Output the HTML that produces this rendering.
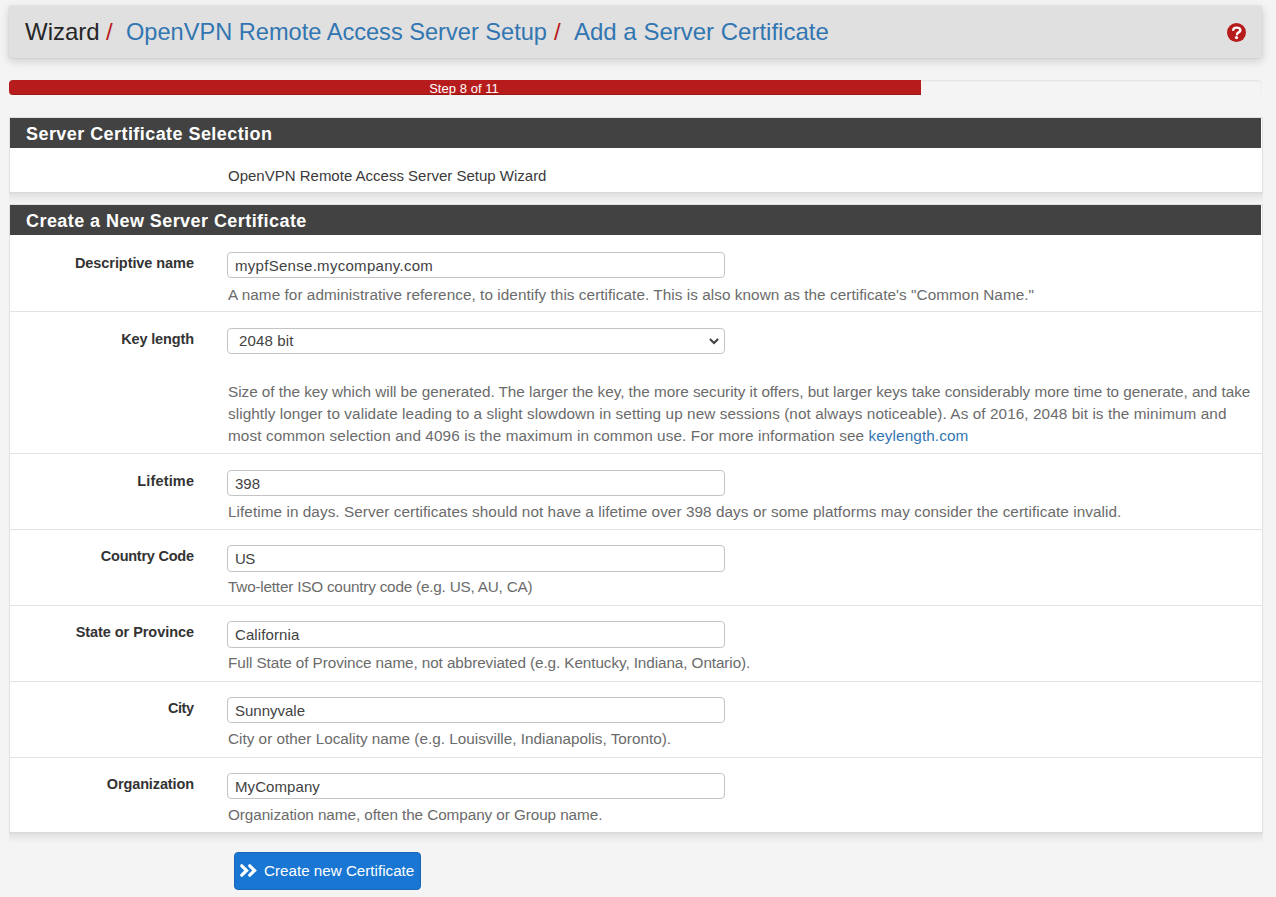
<!DOCTYPE html>
<html>
<head>
<meta charset="utf-8">
<style>
html,body{margin:0;padding:0;}
body{background:#f4f4f4;font-family:"Liberation Sans",sans-serif;color:#212121;width:1276px;height:897px;overflow:hidden;position:relative;}
.abs{position:absolute;}
.crumb{left:9px;top:6px;width:1253px;height:52px;background:#e0e0e0;border-radius:1px;box-shadow:0 3px 10px rgba(0,0,0,.16),0 0 2px rgba(0,0,0,.12);}
.ct{position:absolute;top:12px;font-size:24px;line-height:28px;white-space:nowrap;color:#262626;}
.ct.lk{color:#3276b1;}
.ct.sl{color:#b71c1c;}
.help{position:absolute;left:1217.5px;top:16.5px;width:19px;height:19px;}
.prog{left:9px;top:80px;width:1253px;height:15px;background:#f4f4f4;border-radius:4px;box-shadow:inset 0 1px 2px rgba(0,0,0,.08);overflow:hidden;}
.prog .bar{position:absolute;left:0;top:0;width:912px;height:15px;background:#b71c1c;color:#fff;font-size:13px;line-height:17px;text-align:center;text-indent:-2px;letter-spacing:0.05px;box-shadow:inset 0 -1px 0 rgba(0,0,0,.15);}
.panel{left:9px;width:1252px;background:#fff;border:1px solid #e0e0e0;border-bottom-color:#d9d9d9;}
.panel::after{content:"";position:absolute;left:-1px;right:-1px;top:calc(100% + 1px);height:10px;background:linear-gradient(rgba(0,0,0,.085),rgba(0,0,0,.04) 50%,rgba(0,0,0,0));}
.ph{height:30px;margin-right:1px;background:#424242;color:#fff;font-weight:bold;font-size:18px;letter-spacing:0.44px;line-height:32px;padding-left:16px;white-space:nowrap;}
.sep{position:absolute;left:10px;width:1252px;height:1px;background:#e3e3e3;}
.lbl{position:absolute;right:1082px;font-weight:bold;font-size:14.5px;line-height:20px;white-space:nowrap;color:#333;}
.inp{position:absolute;left:227px;width:496px;height:24px;border:1px solid #c4c4c4;border-radius:4px;background:#fff;}
.inp span{position:absolute;left:7px;top:1px;line-height:24px;font-size:15px;color:#424242;white-space:nowrap;}
.hlp{position:absolute;left:228px;font-size:15.3px;color:#6b6b6b;white-space:nowrap;line-height:22px;}
.hlp a{color:#3276b1;text-decoration:none;}
.btn{left:234px;top:852px;width:185px;height:36px;background:#1976d2;border:1px solid #1b66b5;border-radius:4px;color:#fff;}
.btn span{position:absolute;left:29px;top:-1px;line-height:38px;font-size:15.2px;white-space:nowrap;}
</style>
</head>
<body>
<div class="abs crumb">
  <span class="ct" style="left:16px;">Wizard</span>
  <span class="ct sl" style="left:97px;">/</span>
  <span class="ct lk" style="left:117px;font-size:23.6px;">OpenVPN Remote Access Server Setup</span>
  <span class="ct sl" style="left:545px;">/</span>
  <span class="ct lk" style="left:565px;">Add a Server Certificate</span>
  <svg class="help" viewBox="0 0 19 19"><circle cx="9.5" cy="9.5" r="9.5" fill="#b71c1c"/><path d="M6.2 6.9 C6.4 5.2 7.7 4.6 9.6 4.6 C11.6 4.6 13.4 5.5 13.4 7.2 C13.4 9.4 10.3 9.3 10.0 11.3" stroke="#fff" stroke-width="2.4" fill="none" stroke-linecap="round"/><circle cx="9.5" cy="14.6" r="1.6" fill="#fff"/></svg>
</div>
<div class="abs prog"><div class="bar">Step 8 of 11</div></div>
<div class="abs panel" style="top:117px;height:74px;">
  <div class="ph">Server Certificate Selection</div>
</div>
<div class="hlp" style="top:165px;color:#3a3a3a;font-size:15px;">OpenVPN Remote Access Server Setup Wizard</div>
<div class="abs panel" style="top:204px;height:627px;">
  <div class="ph">Create a New Server Certificate</div>
</div>

<div class="lbl" style="top:253px;letter-spacing:-0.067px;margin-right:0.067px;">Descriptive name</div>
<div class="inp" style="top:252px;height:24px;"><span style="letter-spacing:0.29px;">mypfSense.mycompany.com</span></div>
<div class="hlp" style="top:284px;letter-spacing:0.058px;">A name for administrative reference, to identify this certificate. This is also known as the certificate's &quot;Common Name.&quot;</div>
<div class="sep" style="top:311px;"></div>
<div class="lbl" style="top:329px;letter-spacing:-0.14px;margin-right:0.14px;">Key length</div>
<div class="inp" style="top:328px;"><span style="left:11px;top:0;letter-spacing:0.16px;">2048 bit</span><svg style="position:absolute;left:480.5px;top:9px;" width="10" height="7" viewBox="0 0 10 7"><path d="M0.9 0.9 L5 5 L9.1 0.9" stroke="#444" stroke-width="2.1" fill="none"/></svg></div>
<div class="hlp" style="top:381px;letter-spacing:-0.031px;">Size of the key which will be generated. The larger the key, the more security it offers, but larger keys take considerably more time to generate, and take</div>
<div class="hlp" style="top:403px;letter-spacing:0.082px;">slightly longer to validate leading to a slight slowdown in setting up new sessions (not always noticeable). As of 2016, 2048 bit is the minimum and</div>
<div class="hlp" style="top:425px;letter-spacing:0.102px;">most common selection and 4096 is the maximum in common use. For more information see <a>keylength.com</a></div>
<div class="sep" style="top:453px;"></div>
<div class="lbl" style="top:471px;letter-spacing:0.17px;margin-right:-0.17px;">Lifetime</div>
<div class="inp" style="top:470px;height:24px;"><span style="letter-spacing:0px;">398</span></div>
<div class="hlp" style="top:501px;letter-spacing:0.068px;">Lifetime in days. Server certificates should not have a lifetime over 398 days or some platforms may consider the certificate invalid.</div>
<div class="sep" style="top:529px;"></div>
<div class="lbl" style="top:546px;letter-spacing:-0.24px;margin-right:0.24px;">Country Code</div>
<div class="inp" style="top:545px;height:25px;"><span style="letter-spacing:-0.5px;">US</span></div>
<div class="hlp" style="top:576px;letter-spacing:-0.207px;">Two-letter ISO country code (e.g. US, AU, CA)</div>
<div class="sep" style="top:605px;"></div>
<div class="lbl" style="top:622px;letter-spacing:-0.056px;margin-right:0.056px;">State or Province</div>
<div class="inp" style="top:621px;height:25px;"><span style="letter-spacing:0.1px;">California</span></div>
<div class="hlp" style="top:652px;letter-spacing:-0.091px;">Full State of Province name, not abbreviated (e.g. Kentucky, Indiana, Ontario).</div>
<div class="sep" style="top:681px;"></div>
<div class="lbl" style="top:698px;letter-spacing:-0.45px;margin-right:0.45px;">City</div>
<div class="inp" style="top:697px;height:24px;"><span style="letter-spacing:0px;">Sunnyvale</span></div>
<div class="hlp" style="top:728px;letter-spacing:0.006px;">City or other Locality name (e.g. Louisville, Indianapolis, Toronto).</div>
<div class="sep" style="top:757px;"></div>
<div class="lbl" style="top:774px;letter-spacing:-0.13px;margin-right:0.13px;">Organization</div>
<div class="inp" style="top:773px;height:24px;"><span style="letter-spacing:0.08px;">MyCompany</span></div>
<div class="hlp" style="top:804px;letter-spacing:-0.08px;">Organization name, often the Company or Group name.</div>
<div class="abs btn">
  <svg style="position:absolute;left:-1px;top:-1px;" width="30" height="38" viewBox="0 0 30 38"><path d="M7.8 13.8 L12.6 18.5 L7.8 23.2 M15.8 13.8 L20.6 18.5 L15.8 23.2" stroke="#fff" stroke-width="3.2" fill="none" stroke-linecap="round" stroke-linejoin="miter"/></svg>
  <span>Create new Certificate</span>
</div>
</body>
</html>
